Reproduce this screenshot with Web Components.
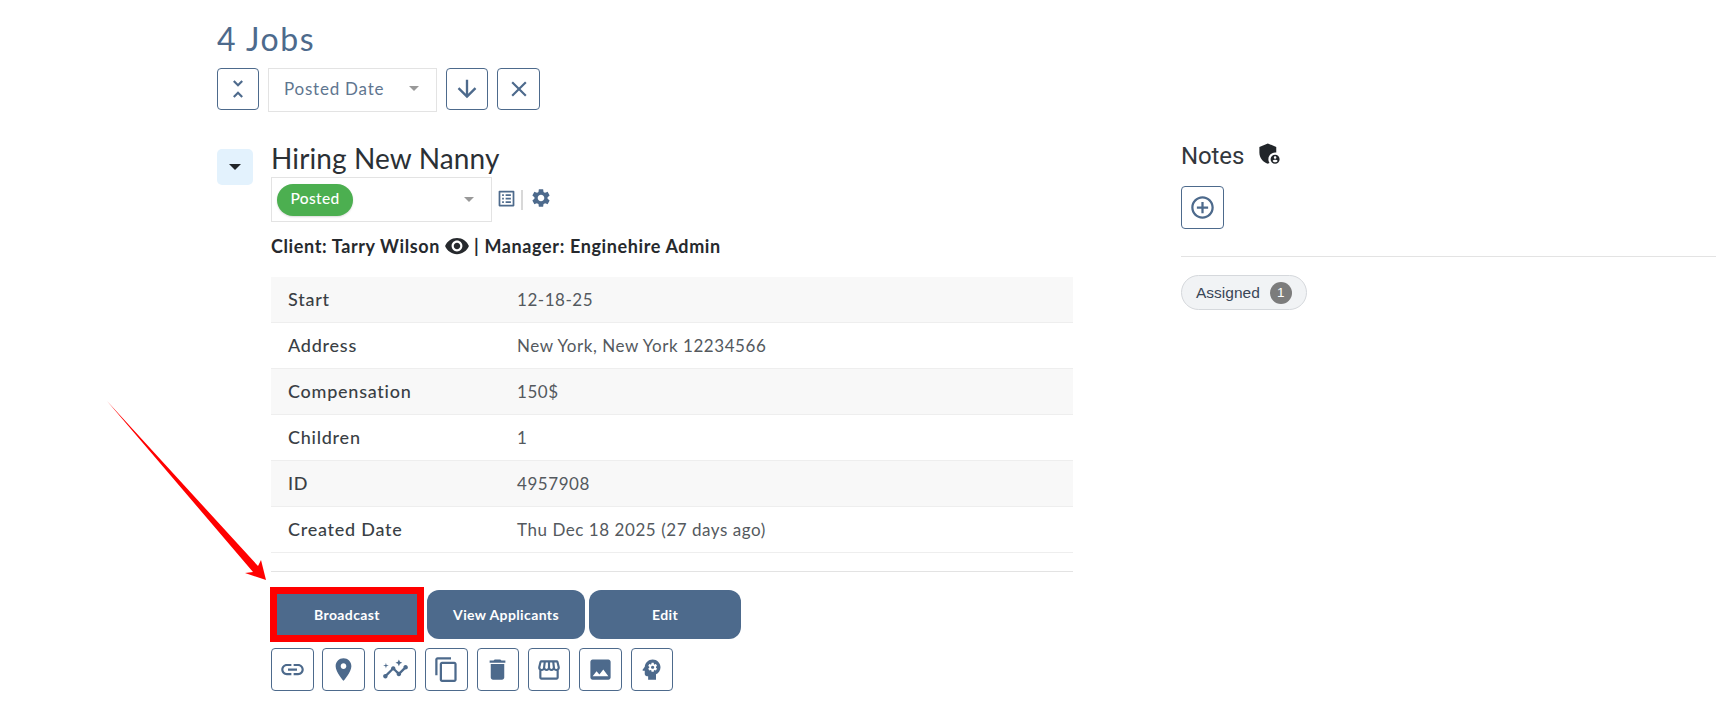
<!DOCTYPE html>
<html>
<head>
<meta charset="utf-8">
<title>Jobs</title>
<style>
html, body { margin: 0; height: 703px; overflow: hidden; background: #fff; }
body { font-family: Lato, "Noto Sans", sans-serif; color: #212529; }
</style>
</head>
<body>
<job-page></job-page>

<script>
const icons = {
    unfold: '<path d="M7.41 18.59L8.83 20 12 16.83 15.17 20l1.41-1.41L12 14l-4.59 4.59zm9.18-13.18L15.17 4 12 7.17 8.83 4 7.41 5.41 12 10l4.59-4.59z"/>',
    down: '<path d="M20 12l-1.41-1.41L13 16.17V4h-2v12.17l-5.58-5.59L4 12l8 8 8-8z"/>',
    close: '<path d="M19 6.41L17.59 5 12 10.59 6.41 5 5 6.41 10.59 12 5 17.59 6.41 19 12 13.41 17.59 19 19 17.59 13.41 12z"/>',
    gear: '<path d="M19.14 12.94c.04-.3.06-.61.06-.94 0-.32-.02-.64-.07-.94l2.03-1.58c.18-.14.23-.41.12-.61l-1.92-3.32c-.12-.22-.37-.29-.59-.22l-2.39.96c-.5-.38-1.03-.7-1.62-.94l-.36-2.54c-.04-.24-.24-.41-.48-.41h-3.84c-.24 0-.43.17-.47.41l-.36 2.54c-.59.24-1.13.57-1.62.94l-2.39-.96c-.22-.08-.47 0-.59.22L2.74 8.87c-.12.21-.08.47.12.61l2.03 1.58c-.05.3-.09.63-.09.94s.02.64.07.94l-2.03 1.58c-.18.14-.23.41-.12.61l1.92 3.32c.12.22.37.29.59.22l2.39-.96c.5.38 1.03.7 1.62.94l.36 2.54c.05.24.24.41.48.41h3.84c.24 0 .44-.17.47-.41l.36-2.54c.59-.24 1.13-.56 1.62-.94l2.39.96c.22.08.47 0 .59-.22l1.92-3.32c.12-.22.07-.47-.12-.61l-2.01-1.58zM12 15.6c-1.98 0-3.6-1.62-3.6-3.6s1.62-3.6 3.6-3.6 3.6 1.62 3.6 3.6-1.62 3.6-3.6 3.6z"/>',
    eye: '<path d="M12 4.5C7 4.5 2.73 7.61 1 12c1.73 4.39 6 7.5 11 7.5s9.27-3.11 11-7.5c-1.73-4.39-6-7.5-11-7.5zM12 17c-2.76 0-5-2.24-5-5s2.24-5 5-5 5 2.24 5 5-2.24 5-5 5zm0-8c-1.66 0-3 1.34-3 3s1.34 3 3 3 3-1.34 3-3-1.34-3-3-3z"/>',
    add: '<path d="M13 7h-2v4H7v2h4v4h2v-4h4v-2h-4V7zm-1-5C6.48 2 2 6.48 2 12s4.48 10 10 10 10-4.48 10-10S17.52 2 12 2zm0 18c-4.41 0-8-3.59-8-8s3.59-8 8-8 8 3.59 8 8-3.59 8-8 8z"/>',
    link: '<path d="M3.9 12c0-1.71 1.39-3.1 3.1-3.1h4V7H7c-2.76 0-5 2.24-5 5s2.24 5 5 5h4v-1.9H7c-1.71 0-3.1-1.39-3.1-3.1zM8 13h8v-2H8v2zm9-6h-4v1.9h4c1.71 0 3.1 1.39 3.1 3.1s-1.39 3.1-3.1 3.1h-4V17h4c2.76 0 5-2.24 5-5s-2.24-5-5-5z"/>',
    place: '<path d="M12 2C8.13 2 5 5.13 5 9c0 5.25 7 13 7 13s7-7.75 7-13c0-3.87-3.13-7-7-7zm0 9.5c-1.38 0-2.5-1.12-2.5-2.5s1.12-2.5 2.5-2.5 2.5 1.12 2.5 2.5-1.12 2.5-2.5 2.5z"/>',
    insights: '<path d="M21 8c-1.45 0-2.26 1.44-1.93 2.51l-3.55 3.56c-.3-.09-.74-.09-1.04 0l-2.55-2.55C12.27 10.45 11.46 9 10 9c-1.45 0-2.27 1.44-1.93 2.52l-4.56 4.55C2.44 15.74 1 16.55 1 18c0 1.1.9 2 2 2 1.45 0 2.26-1.44 1.93-2.51l4.55-4.56c.3.09.74.09 1.04 0l2.55 2.55C12.73 16.55 13.54 18 15 18c1.45 0 2.27-1.44 1.93-2.52l3.56-3.55c1.07.33 2.51-.48 2.51-1.93 0-1.1-.9-2-2-2z"/><path d="M15 9l.94-2.07L18 6l-2.06-.93L15 3l-.92 2.07L12 6l2.08.93zM3.5 11L4 9l2-.5L4 8l-.5-2L3 8l-2 .5L3 9z"/>',
    copy: '<path d="M16 1H4c-1.1 0-2 .9-2 2v14h2V3h12V1zm3 4H8c-1.1 0-2 .9-2 2v14c0 1.1.9 2 2 2h11c1.1 0 2-.9 2-2V7c0-1.1-.9-2-2-2zm0 16H8V7h11v14z"/>',
    trash: '<path d="M6 19c0 1.1.9 2 2 2h8c1.1 0 2-.9 2-2V7H6v12zM19 4h-3.5l-1-1h-5l-1 1H5v2h14V4z"/>',
    store: '<path d="M21.9 8.89l-1.05-4.37c-.22-.9-1-1.52-1.91-1.52H5.05c-.9 0-1.69.63-1.9 1.52L2.1 8.89c-.24 1.02-.02 2.06.62 2.88.08.11.19.19.28.29V19c0 1.1.9 2 2 2h14c1.1 0 2-.9 2-2v-6.94c.09-.09.2-.18.28-.28.64-.82.87-1.87.62-2.89zm-2.99-3.9l1.05 4.37c.1.42.01.84-.25 1.17-.14.18-.44.47-.94.47-.61 0-1.14-.49-1.21-1.14L16.98 5l1.93-.01zM13 5h1.96l.54 4.52c.05.39-.07.78-.33 1.07-.22.26-.54.41-.95.41-.67 0-1.22-.59-1.22-1.31V5zM8.49 9.52L9.04 5H11v4.69c0 .72-.55 1.31-1.29 1.31-.34 0-.65-.15-.89-.41-.25-.29-.37-.68-.33-1.07zm-4.45-.16L5.05 5h1.97l-.58 4.86c-.08.65-.6 1.14-1.21 1.14-.49 0-.8-.29-.93-.47-.27-.32-.36-.75-.26-1.17zM5 19v-6.03c.08.01.15.03.23.03.87 0 1.66-.36 2.24-.95.6.6 1.4.95 2.31.95.87 0 1.65-.36 2.23-.93.59.57 1.39.93 2.29.93.84 0 1.64-.35 2.24-.95.58.59 1.37.95 2.24.95.08 0 .15-.02.23-.03V19H5z"/>',
    image: '<path d="M21 19V5c0-1.1-.9-2-2-2H5c-1.1 0-2 .9-2 2v14c0 1.1.9 2 2 2h14c1.1 0 2-.9 2-2zM8.5 13.5l2.5 3.01L14.5 12l4.5 6H5l3.5-4.5z"/>',
    psychology: '<path d="M13 8.57c-.79 0-1.43.64-1.43 1.43s.64 1.43 1.43 1.43 1.43-.64 1.43-1.43-.64-1.43-1.43-1.43z"/><path d="M13 3C9.25 3 6.2 5.94 6.02 9.64L4.1 12.2c-.25.33-.01.8.4.8H6v3c0 1.1.9 2 2 2h1v3h7v-4.68c2.36-1.12 4-3.53 4-6.32 0-3.87-3.13-7-7-7zm3 7c0 .13-.01.26-.02.39l.83.66c.08.06.1.16.05.25l-.8 1.39c-.05.09-.16.12-.24.09l-.99-.4c-.21.16-.43.29-.67.39L14 13.83c-.01.1-.1.17-.2.17h-1.6c-.1 0-.18-.07-.2-.17l-.15-1.06c-.25-.1-.47-.23-.68-.39l-.99.4c-.09.03-.2 0-.25-.09l-.8-1.39c-.05-.08-.03-.19.05-.25l.84-.66c-.01-.13-.02-.26-.02-.39s.02-.27.04-.39l-.85-.66c-.08-.06-.1-.16-.05-.26l.8-1.38c.05-.09.15-.12.24-.09l1 .4c.2-.15.43-.29.67-.39L12 6.17c.02-.1.1-.17.2-.17h1.6c.1 0 .18.07.2.17l.15 1.06c.24.1.46.23.67.39l1-.4c.09-.03.2 0 .24.09l.8 1.38c.05.09.03.2-.05.26l-.85.66c.03.12.04.25.04.39z"/>',
    list: '<path d="M19 5v14H5V5h14m1.1-2H3.9c-.5 0-.9.4-.9.9v16.2c0 .4.4.9.9.9h16.2c.4 0 .9-.5.9-.9V3.9c0-.5-.5-.9-.9-.9zM11 7h6v2h-6V7zm0 4h6v2h-6v-2zm0 4h6v2h-6zM7 7h2v2H7zm0 4h2v2H7zm0 4h2v2H7z"/>',
    shield: '<path d="M17 11c.34 0 .67.04 1 .09V6.27L10.5 3 3 6.27v4.91c0 4.54 3.2 8.79 7.5 9.82.55-.13 1.08-.32 1.6-.55-.69-.98-1.1-2.17-1.1-3.45 0-3.31 2.69-6 6-6z"/><path d="M17 13c-2.21 0-4 1.79-4 4s1.79 4 4 4 4-1.79 4-4-1.79-4-4-4zm0 1.38c.62 0 1.12.51 1.12 1.12s-.51 1.12-1.12 1.12-1.12-.51-1.12-1.12.5-1.12 1.12-1.12zm0 5.37c-.93 0-1.74-.46-2.24-1.17.05-.72 1.51-1.08 2.24-1.08s2.19.36 2.24 1.08c-.5.71-1.31 1.17-2.24 1.17z"/>'
};

function svgIcon(name, size, color) {
    return `<svg viewBox="0 0 24 24" width="${size}" height="${size}" fill="${color}">${icons[name]}</svg>`;
}

class IconButton extends HTMLElement {
    connectedCallback() {
        const size = this.getAttribute("size") || 24;
        this.attachShadow({ mode: "open" }).innerHTML = `
        <style>
        :host {
          display: flex;
          align-items: center;
          justify-content: center;
          box-sizing: border-box;
          width: var(--w, 43px);
          height: var(--h, 43px);
          border: 1px solid #4d6a8c;
          border-radius: 4px;
          background: #fff;
        }
        svg { display: block; }
        </style>
        ${svgIcon(this.getAttribute("icon"), size, "#4d6a8c")}`;
    }
}

class PickBox extends HTMLElement {
    connectedCallback() {
        this.attachShadow({ mode: "open" }).innerHTML = `
        <style>
        :host {
          display: flex;
          align-items: center;
          justify-content: space-between;
          box-sizing: border-box;
          border: 1px solid #e3e3e3;
          background: #fff;
        }
        .caret {
          width: 0;
          height: 0;
          border-left: 5px solid transparent;
          border-right: 5px solid transparent;
          border-top: 5px solid #999;
        }
        </style>
        <slot></slot>
        <span class="caret"></span>`;
    }
}

class StatusChip extends HTMLElement {
    connectedCallback() {
        this.attachShadow({ mode: "open" }).innerHTML = `
        <style>
        :host {
          display: flex;
          align-items: center;
          justify-content: center;
          box-sizing: border-box;
          width: 76px;
          height: 32px;
          padding-bottom: 3px;
          border-radius: 16px;
          background: #4caf50;
          color: #fff;
          font-size: 15.5px;
          font-weight: 500;
          letter-spacing: .35px;
          box-shadow: 0 1px 2px rgba(0, 0, 0, .15);
        }
        </style>
        <slot></slot>`;
    }
}

class InfoRow extends HTMLElement {
    connectedCallback() {
        this.attachShadow({ mode: "open" }).innerHTML = `
        <style>
        :host {
          display: grid;
          grid-template-columns: 229px 1fr;
          align-items: center;
          box-sizing: border-box;
          height: 46px;
          padding-left: 17px;
          border-bottom: 1px solid #eee;
        }
        :host(:nth-child(odd)) { background: #f8f8f8; }
        .label { padding-bottom: 2px; font-size: 18px; letter-spacing: .75px; font-weight: 500; color: #3a3f45; }
        .value { font-size: 17px; letter-spacing: .55px; font-weight: 400; color: #54595e; }
        </style>
        <span class="label">${this.getAttribute("label")}</span>
        <span class="value"><slot></slot></span>`;
    }
}

class ActionButton extends HTMLElement {
    connectedCallback() {
        this.attachShadow({ mode: "open" }).innerHTML = `
        <style>
        :host {
          display: flex;
          align-items: center;
          justify-content: center;
          height: 49px;
          border-radius: 12px;
          background: #4d6a8c;
          color: #fff;
          font-size: 14px;
          font-weight: 700;
          letter-spacing: .38px;
        }
        </style>
        <slot></slot>`;
    }
}

class JobCard extends HTMLElement {
    connectedCallback() {
        this.attachShadow({ mode: "open" }).innerHTML = `
        <style>
        :host {
          display: flex;
          gap: 18px;
        }
        .toggle {
          width: 36px;
          height: 36px;
          margin-top: 6px;
          border-radius: 5px;
          background: #e3f2fd;
          display: flex;
          align-items: center;
          justify-content: center;
        }
        .toggle i {
          width: 0;
          height: 0;
          border-left: 6px solid transparent;
          border-right: 6px solid transparent;
          border-top: 6px solid #212529;
        }
        .main { width: 802px; }
        h2 {
          margin: 0;
          padding-bottom: 3px;
          font-size: 28px;
          line-height: 31px;
          font-weight: 400;
          letter-spacing: .12px;
          color: #2b3035;
        }
        .status { display: flex; align-items: center; }
        pick-box {
          width: 221px;
          height: 45px;
          padding: 0 17px 0 5px;
        }
        .tool { margin-left: 4px; display: block; }
        .sep { width: 1.5px; height: 20px; margin-left: 4px; background: #d8d8d8; }
        .gear { margin-left: 7.5px; display: block; }
        .people {
          margin-top: 12px;
          height: 24px;
          display: flex;
          align-items: center;
          gap: 4px;
          font-size: 18px;
          font-weight: 700;
          letter-spacing: .62px;
          color: #26292d;
        }
        .rows { margin-top: 19px; }
        hr { margin: 18px 0; border: 0; border-top: 1px solid #e3e3e3; }
        .actions { display: flex; gap: 4px; }
        .actions :nth-child(1) { width: 152px; }
        .actions :nth-child(2) { width: 158px; }
        .actions :nth-child(3) { width: 152px; }
        .tools { display: flex; gap: 8.9px; margin-top: 9px; --w: 42.5px; }
        </style>
        <div class="toggle"><i></i></div>
        <div class="main">
          <h2>Hiring New Nanny</h2>
          <div class="status">
            <pick-box><status-chip>Posted</status-chip></pick-box>
            <span class="tool">${svgIcon("list", 21, "#4d6a8c")}</span>
            <span class="sep"></span>
            <span class="gear">${svgIcon("gear", 22, "#4d6a8c")}</span>
          </div>
          <div class="people">
            <span>Client: Tarry Wilson</span>
            ${svgIcon("eye", 26, "#26292d")}
            <span>| Manager: Enginehire Admin</span>
          </div>
          <div class="rows">
            <info-row label="Start">12-18-25</info-row>
            <info-row label="Address">New York, New York 12234566</info-row>
            <info-row label="Compensation">150$</info-row>
            <info-row label="Children">1</info-row>
            <info-row label="ID">4957908</info-row>
            <info-row label="Created Date">Thu Dec 18 2025 (27 days ago)</info-row>
          </div>
          <hr>
          <div class="actions">
            <action-button>Broadcast</action-button>
            <action-button>View Applicants</action-button>
            <action-button>Edit</action-button>
          </div>
          <div class="tools">
            <icon-button icon="link" size="27"></icon-button>
            <icon-button icon="place" size="27"></icon-button>
            <icon-button icon="insights" size="27"></icon-button>
            <icon-button icon="copy" size="27"></icon-button>
            <icon-button icon="trash" size="27"></icon-button>
            <icon-button icon="store" size="26"></icon-button>
            <icon-button icon="image" size="27"></icon-button>
            <icon-button icon="psychology" size="27"></icon-button>
          </div>
        </div>`;
    }
}

class NotesPanel extends HTMLElement {
    connectedCallback() {
        this.attachShadow({ mode: "open" }).innerHTML = `
        <style>
        :host {
          display: block;
          flex: 1;
          font-family: "Liberation Sans", Arial, sans-serif;
        }
        .head {
          height: 26px;
          display: flex;
          align-items: center;
          gap: 11.5px;
          font-size: 24px;
          color: #33383d;
        }
        .head span { font-family: Roboto, sans-serif; letter-spacing: -.1px; }
        .head svg { margin-top: -5px; }
        icon-button { margin-top: 17px; }
        hr { margin: 27px 0 18px; border: 0; border-top: 1px solid #e3e3e3; }
        .chip {
          display: inline-flex;
          align-items: center;
          box-sizing: border-box;
          height: 35px;
          padding: 0 14px 0 14px;
          border: 1px solid #d5d8dc;
          border-radius: 18px;
          background: #f1f3f5;
          font-size: 15.5px;
          color: #3a4657;
        }
        .count {
          width: 22px;
          height: 22px;
          margin-left: 10px;
          border-radius: 50%;
          background: #7c7c7c;
          color: #fff;
          font-size: 13.5px;
          line-height: 22px;
          text-align: center;
        }
        </style>
        <div class="head"><span>Notes</span>${svgIcon("shield", 27, "#212529")}</div>
        <icon-button icon="add" size="27"></icon-button>
        <hr>
        <div class="chip">Assigned<span class="count">1</span></div>`;
    }
}

class JobPage extends HTMLElement {
    connectedCallback() {
        this.attachShadow({ mode: "open" }).innerHTML = `
        <style>
        :host {
          display: block;
          position: relative;
          box-sizing: border-box;
          height: 703px;
          padding: 20px 0 0 217px;
          overflow: hidden;
        }
        h1 {
          margin: 0;
          padding-bottom: 2px;
          font-size: 32px;
          line-height: 38px;
          font-weight: 400;
          letter-spacing: 1.6px;
          color: #4d6a8c;
        }
        .bar { display: flex; gap: 9px; margin-top: 8px; margin-bottom: 31px; height: 44px; --w: 42px; --h: 42px; }
        .bar pick-box {
          width: 169px;
          height: 44px;
          padding: 0 17px 4px 15px;
          color: #5f7690;
          font-size: 17px;
          letter-spacing: .78px;
        }
        .bar icon-button:last-child { --w: 43px; }
        .content { display: flex; gap: 108px; }
        .mark { position: absolute; left: 0; top: 0; pointer-events: none; }
        </style>
        <h1>4 Jobs</h1>
        <div class="bar">
          <icon-button icon="unfold" size="26"></icon-button>
          <pick-box>Posted Date</pick-box>
          <icon-button icon="down" size="28"></icon-button>
          <icon-button icon="close" size="26"></icon-button>
        </div>
        <div class="content">
          <job-card></job-card>
          <notes-panel></notes-panel>
        </div>
        <svg class="mark" width="1716" height="703" viewBox="0 0 1716 703">
          <polygon points="107,401 258,566 261,560 266,580 245,573 253,572" fill="#f00"/>
          <rect x="273.5" y="590.5" width="147" height="48" fill="none" stroke="#f00" stroke-width="7"/>
        </svg>`;
    }
}

customElements.define("icon-button", IconButton);
customElements.define("pick-box", PickBox);
customElements.define("status-chip", StatusChip);
customElements.define("info-row", InfoRow);
customElements.define("action-button", ActionButton);
customElements.define("job-card", JobCard);
customElements.define("notes-panel", NotesPanel);
customElements.define("job-page", JobPage);
</script>
</body>
</html>
